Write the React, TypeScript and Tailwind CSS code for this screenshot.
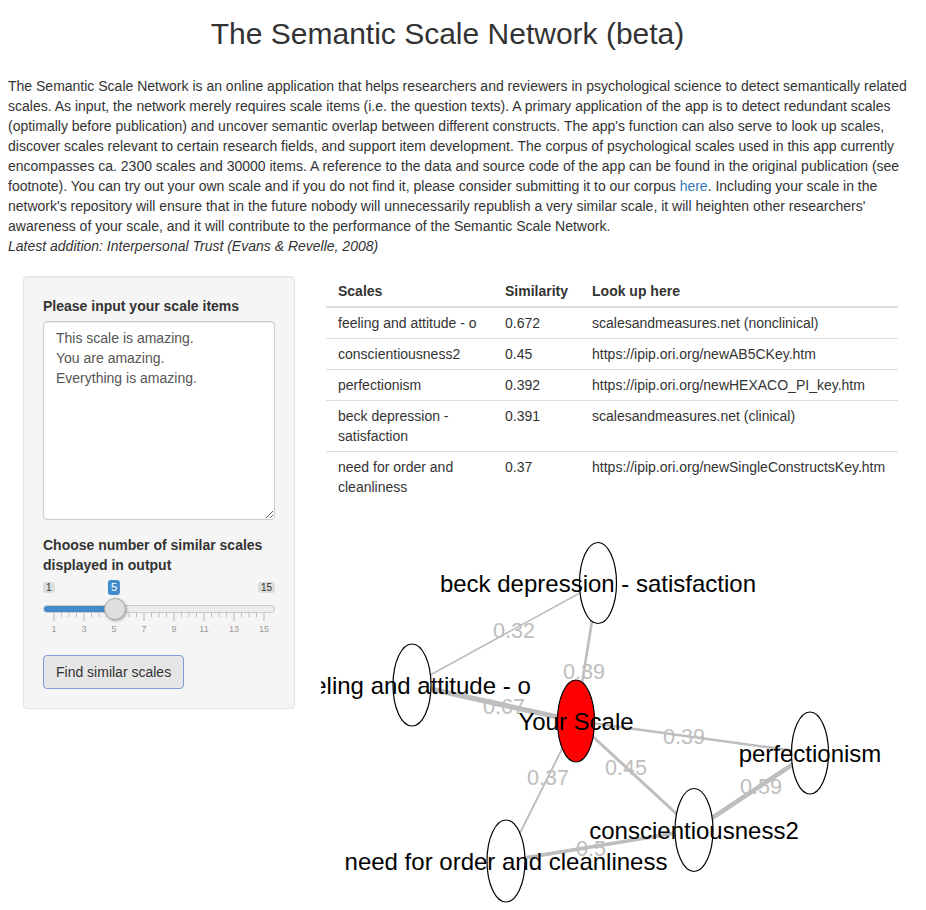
import { useState } from "react";

type Node = { id: string; label: string; cx: number; cy: number; rx: number; ry: number; fill?: string };

const nodes: Node[] = [
  { id: "beck", label: "beck depression - satisfaction", cx: 598, cy: 583, rx: 18.5, ry: 40.5 },
  { id: "feel", label: "feeling and attitude - o", cx: 412, cy: 685, rx: 19, ry: 41 },
  { id: "you", label: "Your Scale", cx: 576, cy: 721, rx: 18.5, ry: 41, fill: "#ff0000" },
  { id: "perf", label: "perfectionism", cx: 810, cy: 753, rx: 18.5, ry: 41 },
  { id: "consc", label: "conscientiousness2", cx: 694, cy: 830, rx: 19, ry: 41.5 },
  { id: "need", label: "need for order and cleanliness", cx: 506, cy: 861, rx: 19, ry: 41 },
];

const edges = [
  { a: "feel", b: "beck", w: 1.6, label: "0.32", lx: 514, ly: 630 },
  { a: "beck", b: "you", w: 2.6, label: "0.39", lx: 584, ly: 671 },
  { a: "feel", b: "you", w: 5.2, label: "0.67", lx: 504, ly: 706 },
  { a: "you", b: "perf", w: 2.6, label: "0.39", lx: 684, ly: 736 },
  { a: "you", b: "consc", w: 3, label: "0.45", lx: 626, ly: 767 },
  { a: "you", b: "need", w: 2, label: "0.37", lx: 548, ly: 777 },
  { a: "consc", b: "perf", w: 4.6, label: "0.59", lx: 761, ly: 786 },
  { a: "need", b: "consc", w: 3.6, label: "0.5", lx: 591, ly: 848 },
];

const rows = [
  { scale: "feeling and attitude - o", sim: "0.672", link: "scalesandmeasures.net (nonclinical)" },
  { scale: "conscientiousness2", sim: "0.45", link: "https://ipip.ori.org/newAB5CKey.htm" },
  { scale: "perfectionism", sim: "0.392", link: "https://ipip.ori.org/newHEXACO_PI_key.htm" },
  { scale: "beck depression - satisfaction", sim: "0.391", link: "scalesandmeasures.net (clinical)" },
  { scale: "need for order and cleanliness", sim: "0.37", link: "https://ipip.ori.org/newSingleConstructsKey.htm" },
];

function ScaleSlider() {
  const [value] = useState(5);
  // handle centre: 11px inset, 15px per step (1..15 over 210px)
  const pos = 11 + (value - 1) * 15;
  const labels = [1, 3, 5, 7, 9, 11, 13, 15];

  return (
    <div className="w-[232px]">
      <div className="relative flex h-[25px] justify-between">
        <span className="mt-[2px] h-[11px] rounded-[3px] bg-black/10 px-[3px] text-[10px] leading-[11px] text-[#333]">1</span>
        <span
          className="absolute top-0 h-[15px] -translate-x-1/2 rounded-[3px] bg-[#428bca] px-[3px] text-[11px] leading-[15px] text-white"
          style={{ left: pos }}
        >
          {value}
        </span>
        <span className="mt-[2px] h-[11px] rounded-[3px] bg-black/10 px-[3px] text-[10px] leading-[11px] text-[#333]">15</span>
      </div>

      <div className="relative h-[8px] rounded-full border border-[#cccccc] bg-[#ededed]">
        <div className="h-full rounded-l-full bg-[#428bca]" style={{ width: pos }} />
        <div
          className="absolute top-[-8px] h-[22px] w-[22px] -translate-x-1/2 rounded-full border border-[#ababab] bg-[#dedede] shadow-[1px_1px_3px_rgba(0,0,0,0.3)]"
          style={{ left: pos }}
        />
      </div>

      <svg width="232" height="27" className="block">
        {labels.map((n, i) => {
          const x = 11 + i * 30;
          return (
            <g key={n}>
              <rect x={x - 0.5} y={0} width={1} height={8} fill="#b8bcc4" />
              {i < labels.length - 1 &&
                [1, 2, 3].map((k) => (
                  <rect key={k} x={x + k * 7.5 - 0.5} y={0} width={1} height={4} fill="#b8bcc4" />
                ))}
              <text x={x} y={19} textAnchor="middle" fontSize="9" fill="#999">
                {n}
              </text>
            </g>
          );
        })}
      </svg>
    </div>
  );
}

function Network() {
  const byId = Object.fromEntries(nodes.map((n) => [n.id, n]));
  return (
    <svg
      width="581"
      height="420"
      viewBox="321 502 581 420"
      className="-ml-[5px] block"
      fontFamily="'Liberation Sans', Arial, sans-serif"
    >
      {edges.map((e, i) => {
        const a = byId[e.a];
        const b = byId[e.b];
        return <line key={i} x1={a.cx} y1={a.cy} x2={b.cx} y2={b.cy} stroke="#bebebe" strokeWidth={e.w} />;
      })}
      {edges.map((e, i) => (
        <text key={i} x={e.lx} y={e.ly + 7.7} textAnchor="middle" fontSize="21.6" fill="#bebebe">
          {e.label}
        </text>
      ))}
      {nodes.map((n) => (
        <ellipse key={n.id} cx={n.cx} cy={n.cy} rx={n.rx} ry={n.ry} fill={n.fill ?? "#fff"} stroke="#000" strokeWidth="1.2" />
      ))}
      {nodes.map((n) => (
        <text key={n.id} x={n.cx} y={n.cy + 8.6} textAnchor="middle" fontSize="24" fill="#000">
          {n.label}
        </text>
      ))}
    </svg>
  );
}

export default function App() {
  return (
    <div className="min-h-screen bg-white px-[8px] font-['Liberation_Sans',Arial,sans-serif] text-[14px] leading-[20px] text-[#333]">
      {/* Title */}
      <h2 className="mt-[17px] pr-[31px] text-center text-[30px] leading-[33px] font-normal">
        The Semantic Scale Network (beta)
      </h2>

      {/* Intro */}
      <p className="mt-[26px]">
        The Semantic Scale Network is an online application that helps researchers and reviewers in psychological
        science to detect semantically related scales. As input, the network merely requires scale items (i.e. the
        question texts). A primary application of the app is to detect redundant scales (optimally before publication)
        and uncover semantic overlap between different constructs. The app's function can also serve to look up
        scales, discover scales relevant to certain research fields, and support item development. The corpus of
        psychological scales used in this app currently encompasses ca. 2300 scales and 30000 items. A reference to the
        data and source code of the app can be found in the original publication (see footnote). You can try out your
        own scale and if you do not find it, please consider submitting it to our corpus{" "}
        <a href="#" className="text-[#337ab7]">
          here
        </a>
        . Including your scale in the network's repository will ensure that in the future nobody will unnecessarily
        republish a very similar scale, it will heighten other researchers' awareness of your scale, and it will
        contribute to the performance of the Semantic Scale Network.
        <br />
        <i>Latest addition: Interpersonal Trust (Evans &amp; Revelle, 2008)</i>
      </p>

      <div className="mt-[20px] flex items-start">
        {/* Sidebar */}
        <div className="ml-[15px] w-[272px] rounded-[4px] border border-[#e3e3e3] bg-[#f5f5f5] p-[19px] shadow-[inset_0_1px_1px_rgba(0,0,0,0.05)]">
          <label className="mb-[5px] block font-bold">Please input your scale items</label>
          <textarea
            className="block h-[199px] w-full rounded-[4px] border border-[#ccc] bg-white px-[12px] py-[6px] text-[14px] leading-[20px] text-[#555] shadow-[inset_0_1px_1px_rgba(0,0,0,0.075)] outline-none"
            defaultValue={"This scale is amazing.\nYou are amazing.\nEverything is amazing."}
          />

          <label className="mt-[15px] mb-[5px] block font-bold">
            Choose number of similar scales displayed in output
          </label>
          <ScaleSlider />

          <button className="mt-[15px] rounded-[4px] border border-[#7f9ed8] bg-[#e6e6e6] px-[12px] py-[6px] leading-[20px] text-[#333]">
            Find similar scales
          </button>
        </div>

        {/* Main */}
        <div className="ml-[31px] w-[576px]">
          <table className="border-collapse text-left">
            <thead>
              <tr>
                <th className="w-[167px] border-b-2 border-[#ddd] px-[12px] py-[5px] font-bold">Scales</th>
                <th className="w-[87px] border-b-2 border-[#ddd] px-[12px] py-[5px] font-bold">Similarity</th>
                <th className="w-[318px] border-b-2 border-[#ddd] px-[12px] py-[5px] font-bold">Look up here</th>
              </tr>
            </thead>
            <tbody>
              {rows.map((r, i) => (
                <tr key={i} className={i > 0 ? "border-t border-[#ddd]" : ""}>
                  <td className="px-[12px] py-[5px] align-top">{r.scale}</td>
                  <td className="px-[12px] py-[5px] align-top">{r.sim}</td>
                  <td className="whitespace-nowrap px-[12px] py-[5px] align-top">{r.link}</td>
                </tr>
              ))}
            </tbody>
          </table>

          <Network />
        </div>
      </div>
    </div>
  );
}
